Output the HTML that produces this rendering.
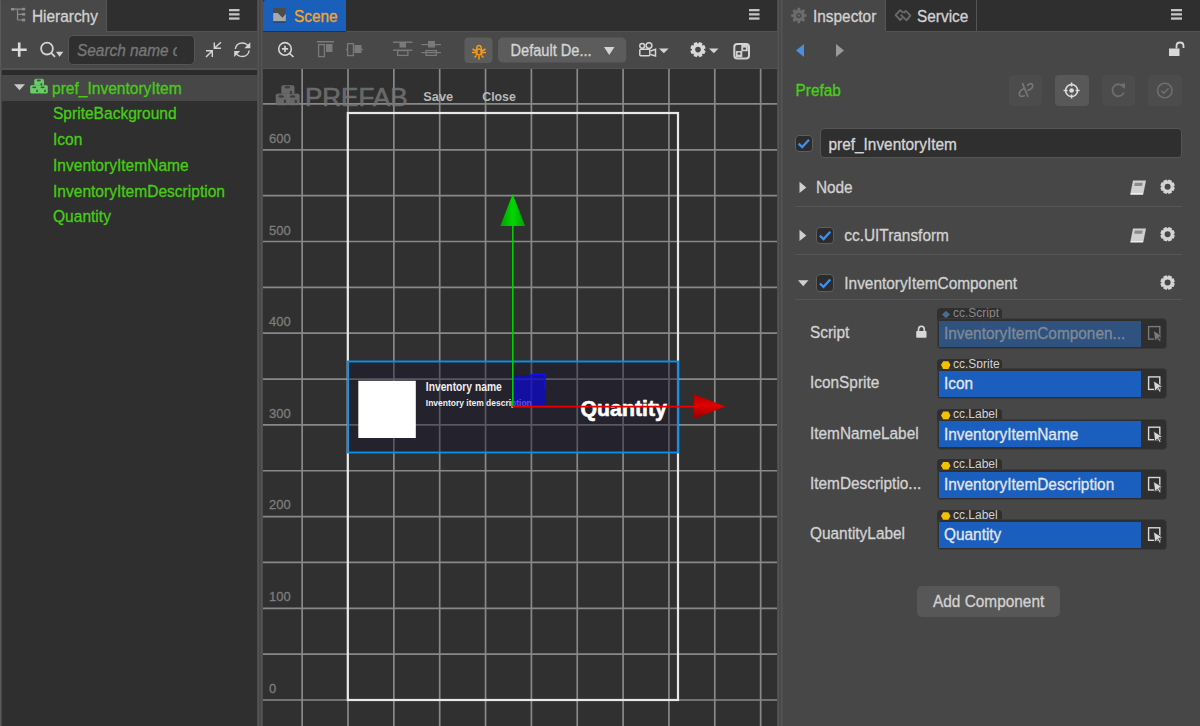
<!DOCTYPE html>
<html><head><meta charset="utf-8">
<style>
*{box-sizing:border-box;margin:0;padding:0}
html,body{width:1200px;height:726px;overflow:hidden;background:#2f2f2f;font-family:"Liberation Sans",sans-serif;color:#cfcfcf}
.a{position:absolute}
.t{position:absolute;white-space:nowrap;font-size:15.4px;line-height:26px;-webkit-text-stroke:0.3px currentColor;transform:scaleY(1.11);transform-origin:0 12.7px}
svg{position:absolute;overflow:visible}
.cb{width:17.5px;height:17.5px;background:#2c2c2c;border:1px solid #5e5e5e;border-radius:4px}
</style></head><body>

<!-- ================= HIERARCHY ================= -->
<div class="a" style="left:0;top:0;width:257px;height:726px;background:#2f2f2f"></div>
<div class="a" style="left:0;top:0;width:2px;height:726px;background:#474747"></div>
<div class="a" style="left:0;top:0;width:1px;height:726px;background:#5a5a5a"></div>
<!-- tab -->
<div class="a" style="left:1px;top:0;width:106px;height:32px;background:#484848;border-right:1px solid #555;border-top-left-radius:3px"></div>
<div class="a" style="left:107px;top:31px;width:150px;height:1px;background:#525252"></div>
<div class="t" style="left:32px;top:3px;color:#d2d2d2">Hierarchy</div>
<!-- toolbar -->
<div class="a" style="left:1px;top:32px;width:256px;height:36px;background:#484848"></div>
<div class="a" style="left:0;top:68px;width:257px;height:2px;background:#525252"></div>
<div class="a" style="left:2px;top:70px;width:255px;height:5px;background:#2b2b2b"></div>
<div class="a" style="left:68px;top:35px;width:127px;height:30px;background:#2f2f2f;border:1px solid #555;border-radius:5px"></div>
<div class="t" style="left:77px;top:37px;color:#777;font-style:italic;width:99.5px;overflow:hidden">Search name or uuid</div>
<!-- tree -->
<div class="a" style="left:2px;top:75px;width:255px;height:26px;background:#474747"></div>
<div class="t" style="left:52px;top:74.5px;color:#46cc16;font-size:15.55px">pref_InventoryItem</div>
<div class="t" style="left:53px;top:100.25px;color:#46cc16;font-size:15.55px">SpriteBackground</div>
<div class="t" style="left:53px;top:126.0px;color:#46cc16;font-size:15.55px">Icon</div>
<div class="t" style="left:53px;top:151.75px;color:#46cc16;font-size:15.55px">InventoryItemName</div>
<div class="t" style="left:53px;top:177.5px;color:#46cc16;font-size:15.55px">InventoryItemDescription</div>
<div class="t" style="left:53px;top:203.25px;color:#46cc16;font-size:15.55px">Quantity</div>

<!-- separators -->
<div class="a" style="left:257px;top:0;width:6px;height:726px;background:#494949;border-left:1px solid #4d4d4d;border-right:1px solid #4d4d4d"></div>
<div class="a" style="left:258px;top:0;width:1px;height:726px;background:#545454"></div>
<div class="a" style="left:261px;top:0;width:1px;height:726px;background:#545454"></div>
<div class="a" style="left:777px;top:0;width:6px;height:726px;background:#494949;border-left:1px solid #4d4d4d;border-right:1px solid #4d4d4d"></div>
<div class="a" style="left:778px;top:0;width:1px;height:726px;background:#545454"></div>
<div class="a" style="left:781px;top:0;width:1px;height:726px;background:#545454"></div>

<!-- ================= SCENE ================= -->
<div class="a" style="left:263px;top:0;width:514px;height:32px;background:#2f2f2f"></div>
<div class="a" style="left:263px;top:0;width:83px;height:31px;background:#1a5fba;border-top-left-radius:3px"></div>
<div class="a" style="left:346px;top:31px;width:431px;height:1px;background:#525252"></div>
<div class="t" style="left:294px;top:3px;color:#f5a623">Scene</div>
<div class="a" style="left:263px;top:32px;width:514px;height:36px;background:#484848"></div>
<div class="a" style="left:263px;top:68px;width:514px;height:1px;background:#525252"></div>
<div id="canvas" class="a" style="left:263px;top:69px;width:514px;height:657px;background:#303030;overflow:hidden">
<svg style="left:-263px;top:-69px" width="1200" height="726" viewBox="0 0 1200 726">
<g stroke="#888888" stroke-width="1.7" fill="none">
<line x1="302.15" y1="69" x2="302.15" y2="726"/>
<line x1="348.0" y1="69" x2="348.0" y2="726"/>
<line x1="393.85" y1="69" x2="393.85" y2="726"/>
<line x1="439.7" y1="69" x2="439.7" y2="726"/>
<line x1="485.55" y1="69" x2="485.55" y2="726"/>
<line x1="531.4" y1="69" x2="531.4" y2="726"/>
<line x1="577.25" y1="69" x2="577.25" y2="726"/>
<line x1="623.1" y1="69" x2="623.1" y2="726"/>
<line x1="668.95" y1="69" x2="668.95" y2="726"/>
<line x1="714.8" y1="69" x2="714.8" y2="726"/>
<line x1="760.65" y1="69" x2="760.65" y2="726"/>
<line x1="263" y1="700.0" x2="777" y2="700.0"/>
<line x1="263" y1="654.15" x2="777" y2="654.15"/>
<line x1="263" y1="608.3" x2="777" y2="608.3"/>
<line x1="263" y1="562.45" x2="777" y2="562.45"/>
<line x1="263" y1="516.6" x2="777" y2="516.6"/>
<line x1="263" y1="470.75" x2="777" y2="470.75"/>
<line x1="263" y1="424.9" x2="777" y2="424.9"/>
<line x1="263" y1="379.05" x2="777" y2="379.05"/>
<line x1="263" y1="333.2" x2="777" y2="333.2"/>
<line x1="263" y1="287.35" x2="777" y2="287.35"/>
<line x1="263" y1="241.5" x2="777" y2="241.5"/>
<line x1="263" y1="195.65" x2="777" y2="195.65"/>
<line x1="263" y1="149.8" x2="777" y2="149.8"/>
<line x1="263" y1="103.95" x2="777" y2="103.95"/>
</g>
<g font-family="Liberation Sans" font-size="13" fill="#7d7d7d" stroke="#7d7d7d" stroke-width="0.3">
<text x="269" y="143.3">600</text>
<text x="269" y="234.8">500</text>
<text x="269" y="326.3">400</text>
<text x="269" y="417.9">300</text>
<text x="269" y="509.4">200</text>
<text x="269" y="601.0">100</text>
<text x="269" y="692.5">0</text>
</g>
<!-- prefab overlay -->
<text x="305" y="105.7" font-family="Liberation Sans" font-size="26" fill="#767676" fill-opacity="0.8" stroke="#767676" stroke-opacity="0.8" stroke-width="0.7">PREFAB</text>
<text x="423.3" y="101" font-family="Liberation Sans" font-weight="bold" font-size="13" fill="#b8b8b8" textLength="29.8" lengthAdjust="spacingAndGlyphs">Save</text>
<text x="482.3" y="101" font-family="Liberation Sans" font-weight="bold" font-size="13" fill="#b8b8b8" textLength="33.5" lengthAdjust="spacingAndGlyphs">Close</text>
<!-- frame -->
<rect x="347.8" y="113" width="330.2" height="587" fill="none" stroke="#e8e8e8" stroke-width="2.2"/>
<!-- node -->
<rect x="347.8" y="361.5" width="330.2" height="91" fill="rgb(20,15,43)" fill-opacity="0.4"/>
<rect x="358.3" y="380.8" width="57.5" height="57.2" fill="#ffffff"/>
<text x="425.8" y="391.4" font-family="Liberation Sans" font-weight="bold" font-size="12" fill="#f0f0f0" textLength="76" lengthAdjust="spacingAndGlyphs">Inventory name</text>
<text x="425.8" y="405.6" font-family="Liberation Sans" font-weight="bold" font-size="9.8" fill="#f0f0f0" textLength="106" lengthAdjust="spacingAndGlyphs">Inventory item description</text>
<text x="580.6" y="416.2" font-family="Liberation Sans" font-weight="bold" font-size="22" fill="#ffffff" stroke="#ffffff" stroke-width="0.6" textLength="86.2" lengthAdjust="spacingAndGlyphs">Quantity</text>
<path d="M513 375.2H529V374.4H545.6V406.4H513Z" fill="#0a06d8" fill-opacity="0.68"/><path d="M529 374.6H545.2V390" stroke="#1010ff" stroke-width="1.3" fill="none"/>
<rect x="347.8" y="361.5" width="330.2" height="91" fill="none" stroke="#0a90ea" stroke-width="1.9"/>
<!-- gizmo -->
<line x1="512.8" y1="406.5" x2="512.8" y2="224" stroke="#00d000" stroke-width="1.6"/>
<polygon points="512.7,194 500.3,226 525.1,226" fill="url(#gg)"/>
<line x1="512.4" y1="406.6" x2="695" y2="406.6" stroke="#ee0000" stroke-width="1.6"/>
<defs><linearGradient id="rg" x1="0" y1="0" x2="0" y2="1"><stop offset="0" stop-color="#b00000"/><stop offset="0.45" stop-color="#e00000"/><stop offset="1" stop-color="#900000"/></linearGradient><linearGradient id="gg" x1="0" y1="0" x2="1" y2="0"><stop offset="0" stop-color="#00a000"/><stop offset="0.5" stop-color="#00d800"/><stop offset="1" stop-color="#00a000"/></linearGradient></defs><polygon points="694,394.3 725.3,406.4 694,419.1" fill="url(#rg)"/>
</svg>
</div>

<!-- ================= INSPECTOR ================= -->
<div class="a" style="left:783px;top:0;width:417px;height:726px;background:#474747"></div>
<div class="a" style="left:886px;top:0;width:314px;height:31px;background:#2f2f2f"></div>
<div class="a" style="left:885px;top:0;width:1px;height:31px;background:#555"></div>
<div class="a" style="left:976px;top:0;width:1px;height:31px;background:#555"></div>
<div class="a" style="left:886px;top:31px;width:314px;height:1px;background:#525252"></div>
<div class="t" style="left:813px;top:3px;color:#d2d2d2">Inspector</div>
<div class="t" style="left:917px;top:3px;color:#d2d2d2">Service</div>


<div class="t" style="left:795.5px;top:77.3px;color:#48d018">Prefab</div>
<!-- prefab buttons -->
<div class="a" style="left:1009px;top:75px;width:33px;height:31px;background:#4c4c4c;border-radius:4px"></div>
<div class="a" style="left:1055px;top:75px;width:33.5px;height:31px;background:#585858;border-radius:4px"></div>
<div class="a" style="left:1101.7px;top:75px;width:33.3px;height:31px;background:#4c4c4c;border-radius:4px"></div>
<div class="a" style="left:1148px;top:75px;width:33.7px;height:31px;background:#4c4c4c;border-radius:4px"></div>
<!-- name -->
<div class="a cb" style="left:795px;top:134.5px"></div>
<div class="a" style="left:820px;top:128px;width:361.5px;height:30px;background:#2f2f2f;border:1px solid #555;border-radius:4px"></div>
<div class="t" style="left:828.5px;top:130.6px;color:#d6d6d6">pref_InventoryItem</div>
<!-- component rows -->
<div class="t" style="left:815.9px;top:174.1px;color:#d2d2d2">Node</div>
<div class="a" style="left:795px;top:206px;width:387px;height:1px;background:#565656"></div>
<div class="a cb" style="left:816.3px;top:226.5px"></div>
<div class="t" style="left:844.3px;top:222.3px;color:#d2d2d2">cc.UITransform</div>
<div class="a" style="left:795px;top:254px;width:387px;height:1px;background:#565656"></div>
<div class="a cb" style="left:816.3px;top:274.3px"></div>
<div class="t" style="left:844.3px;top:269.6px;color:#d2d2d2">InventoryItemComponent</div>
<div class="a" style="left:795px;top:299px;width:387px;height:1px;background:#565656"></div>
<div class="t" style="left:810px;top:319.0px;color:#d2d2d2">Script</div>
<div class="a" style="left:937px;top:308.3px;width:65px;height:14px;background:#2f2f2f;border-radius:4px 4px 0 0"></div>
<div class="a" style="left:953px;top:306.3px;font-size:12px;line-height:14px;color:#8a8a8a;white-space:nowrap">cc.Script</div>
<div class="a" style="left:937px;top:318.0px;width:230px;height:31px;background:#2f2f2f;border-radius:4px;border:1px solid #3b3b3b"></div>
<div class="a" style="left:939px;top:320.7px;width:202px;height:26px;background:#2f527f"></div>
<div class="t" style="left:944px;top:320.1px;color:#7f8a96">InventoryItemComponen...</div>
<div class="t" style="left:810px;top:369.3px;color:#d2d2d2">IconSprite</div>
<div class="a" style="left:937px;top:358.6px;width:65px;height:14px;background:#2f2f2f;border-radius:4px 4px 0 0"></div>
<div class="a" style="left:953px;top:356.6px;font-size:12px;line-height:14px;color:#d2d2d2;white-space:nowrap">cc.Sprite</div>
<div class="a" style="left:937px;top:368.3px;width:230px;height:31px;background:#2f2f2f;border-radius:4px;border:1px solid #3b3b3b"></div>
<div class="a" style="left:939px;top:371.0px;width:202px;height:26px;background:#1a5fbd"></div>
<div class="t" style="left:944px;top:370.4px;color:#e2e6ec">Icon</div>
<div class="t" style="left:810px;top:419.6px;color:#d2d2d2">ItemNameLabel</div>
<div class="a" style="left:937px;top:408.9px;width:65px;height:14px;background:#2f2f2f;border-radius:4px 4px 0 0"></div>
<div class="a" style="left:953px;top:406.9px;font-size:12px;line-height:14px;color:#d2d2d2;white-space:nowrap">cc.Label</div>
<div class="a" style="left:937px;top:418.6px;width:230px;height:31px;background:#2f2f2f;border-radius:4px;border:1px solid #3b3b3b"></div>
<div class="a" style="left:939px;top:421.3px;width:202px;height:26px;background:#1a5fbd"></div>
<div class="t" style="left:944px;top:420.7px;color:#e2e6ec">InventoryItemName</div>
<div class="t" style="left:810px;top:469.9px;color:#d2d2d2">ItemDescriptio...</div>
<div class="a" style="left:937px;top:459.2px;width:65px;height:14px;background:#2f2f2f;border-radius:4px 4px 0 0"></div>
<div class="a" style="left:953px;top:457.2px;font-size:12px;line-height:14px;color:#d2d2d2;white-space:nowrap">cc.Label</div>
<div class="a" style="left:937px;top:468.9px;width:230px;height:31px;background:#2f2f2f;border-radius:4px;border:1px solid #3b3b3b"></div>
<div class="a" style="left:939px;top:471.6px;width:202px;height:26px;background:#1a5fbd"></div>
<div class="t" style="left:944px;top:471.0px;color:#e2e6ec">InventoryItemDescription</div>
<div class="t" style="left:810px;top:520.2px;color:#d2d2d2">QuantityLabel</div>
<div class="a" style="left:937px;top:509.5px;width:65px;height:14px;background:#2f2f2f;border-radius:4px 4px 0 0"></div>
<div class="a" style="left:953px;top:507.5px;font-size:12px;line-height:14px;color:#d2d2d2;white-space:nowrap">cc.Label</div>
<div class="a" style="left:937px;top:519.2px;width:230px;height:31px;background:#2f2f2f;border-radius:4px;border:1px solid #3b3b3b"></div>
<div class="a" style="left:939px;top:521.9px;width:202px;height:26px;background:#1a5fbd"></div>
<div class="t" style="left:944px;top:521.3px;color:#e2e6ec">Quantity</div>
<div class="a" style="left:917px;top:586px;width:143px;height:31px;background:#575757;border-radius:5px"></div>
<div class="t" style="left:933px;top:588.3px;color:#d2d2d2">Add Component</div>

<!--ICONS-->
<svg style="left:0;top:0" width="1200" height="726" viewBox="0 0 1200 726">
<g fill="#8c8c8c"><rect x="11" y="8" width="3.5" height="2.5"/><rect x="22" y="7.8" width="3.2" height="2.6"/><rect x="22" y="13" width="3.2" height="2.6"/><rect x="22" y="18.6" width="3.2" height="2.8"/></g><g stroke="#8c8c8c" stroke-width="1.2" fill="none"><path d="M14.5 9.2H22M17.5 9.2V20M17.5 14.3H22M17.5 20H22"/></g>
<g fill="#c4c4c4"><rect x="229" y="9" width="10.5" height="2.3"/><rect x="229" y="13.2" width="10.5" height="2.3"/><rect x="229" y="17.4" width="10.5" height="2.3"/></g>
<g fill="#c4c4c4"><rect x="749" y="9" width="10.5" height="2.3"/><rect x="749" y="13.2" width="10.5" height="2.3"/><rect x="749" y="17.4" width="10.5" height="2.3"/></g>
<g fill="#c4c4c4"><rect x="1171" y="9" width="11" height="2.3"/><rect x="1171" y="13.2" width="11" height="2.3"/><rect x="1171" y="17.4" width="11" height="2.3"/></g>
<path d="M11.7 49.7H26.7M19.2 42.6V56.8" stroke="#dcdcdc" stroke-width="2.6"/>
<g stroke="#d4d4d4" stroke-width="1.8" fill="none"><circle cx="47" cy="48.6" r="5.9"/><path d="M51.2 52.8L55 56.8"/></g><path d="M56 51.8H63.3L59.6 56.8Z" fill="#d4d4d4"/>
<g stroke="#d4d4d4" stroke-width="1.45" fill="none"><path d="M214.3 42.5V48.3H221M214.8 47.8L221 42.2"/><path d="M206 50.8H212.3V57M211.8 51.3L206 57"/></g>
<g stroke="#d4d4d4" stroke-width="1.4" fill="none"><path d="M235.3 49C236 45 239 43 242.3 43C245 43 247 44 248.5 46.5"/><path d="M249.2 50.5C248.5 54.5 245.5 56.5 242.3 56.5C239.5 56.5 237.3 55.3 236 53"/></g><path d="M250.3 42.3V48.3H244.3Z" fill="#d4d4d4"/><path d="M234.2 57V51H240.2Z" fill="#d4d4d4"/>
<path d="M14 84.3H25L19.5 90.3Z" fill="#c8c8c8"/>
<g transform="translate(30.2,78.8) scale(1.0)" fill-opacity="1"><rect x="4.1" y="0" width="9.7" height="7.5" rx="1.6" fill="#68cc68"/><rect x="0" y="6.2" width="9.4" height="8.6" rx="1.6" fill="#68cc68"/><rect x="8.6" y="6.2" width="9" height="8.6" rx="1.6" fill="#68cc68"/><ellipse cx="8.6" cy="1.7" rx="2.1" ry="0.9" fill="#3a5a3a"/><rect x="10.4" y="4.4" width="1.6" height="2.3" fill="#3a5a3a"/><ellipse cx="4" cy="8.5" rx="2.1" ry="0.9" fill="#3a5a3a"/><rect x="6" y="10.9" width="1.6" height="2.3" fill="#3a5a3a"/><ellipse cx="12.4" cy="8.5" rx="2.1" ry="0.9" fill="#3a5a3a"/><rect x="14" y="10.9" width="1.6" height="2.3" fill="#3a5a3a"/><path d="M0.3 6.6H17.4M4.4 0.4H13.6" stroke="#3a5a3a" stroke-opacity="0.25" stroke-width="0.6"/></g>
<g transform="translate(275.7,85) scale(1.36)" fill-opacity="0.9"><rect x="4.1" y="0" width="9.7" height="7.5" rx="1.6" fill="#6e6e6e"/><rect x="0" y="6.2" width="9.4" height="8.6" rx="1.6" fill="#6e6e6e"/><rect x="8.6" y="6.2" width="9" height="8.6" rx="1.6" fill="#6e6e6e"/><ellipse cx="8.6" cy="1.7" rx="2.1" ry="0.9" fill="#3a3a3a"/><rect x="10.4" y="4.4" width="1.6" height="2.3" fill="#3a3a3a"/><ellipse cx="4" cy="8.5" rx="2.1" ry="0.9" fill="#3a3a3a"/><rect x="6" y="10.9" width="1.6" height="2.3" fill="#3a3a3a"/><ellipse cx="12.4" cy="8.5" rx="2.1" ry="0.9" fill="#3a3a3a"/><rect x="14" y="10.9" width="1.6" height="2.3" fill="#3a3a3a"/><path d="M0.3 6.6H17.4M4.4 0.4H13.6" stroke="#3a3a3a" stroke-opacity="0.25" stroke-width="0.6"/></g>


<rect x="273.2" y="8" width="12.6" height="13.5" fill="#4c4c4c"/><path d="M273.2 13H277.8L282.5 17.8L285.8 13.8V21.5H273.2Z" fill="#a8a8a8"/><rect x="273.2" y="21.4" width="12.6" height="1" fill="#333"/>
<g stroke="#d4d4d4" stroke-width="1.6" fill="none"><circle cx="285" cy="48.9" r="6.3"/><path d="M289.5 53.4L293.5 57"/><path d="M285 45.8V52M281.9 48.9H288.1" stroke-width="1.7"/></g>
<g fill="#7a7a7a"><rect x="317" y="41" width="17" height="1.5"/><rect x="326" y="44" width="6.5" height="8"/><rect x="354.5" y="45" width="7" height="8"/><rect x="399.5" y="42" width="6.5" height="5.5"/><rect x="393" y="41.5" width="19.5" height="1.4"/><rect x="393" y="49.5" width="19.5" height="1.4"/><rect x="428" y="41" width="7" height="6.5"/><rect x="421.5" y="44" width="19.5" height="1.2"/><rect x="421.5" y="52" width="19.5" height="1.2"/></g><g stroke="#7a7a7a" stroke-width="1.3" fill="none"><rect x="318.6" y="44.6" width="5.8" height="12"/><rect x="347.6" y="43.6" width="5.8" height="12"/><path d="M346 49.5H347.6M353.4 49.5H354.5M361.5 49.5H363"/><rect x="397.6" y="50.6" width="10.3" height="4.8"/><rect x="426.1" y="50.6" width="10.3" height="4.8"/></g>
<rect x="464.5" y="37.5" width="28" height="25.5" rx="4" fill="#5c5c5c"/>
<g stroke="#f39a1e" stroke-width="1.5" fill="none"><path d="M476.5 55V50C476.5 47 477.5 45.5 479 45.5C480.5 45.5 481.5 47 481.5 50V55"/><ellipse cx="479" cy="52" rx="2.4" ry="3"/><path d="M472 52.6H476M482 52.6H486M472.5 49L476 51M485.5 49L482 51M474.5 57.5L476.5 55.5M483.5 57.5L481.5 55.5M479 56V59.4"/></g>
<rect x="498" y="37.6" width="128.3" height="25" rx="5" fill="#5c5c5c"/><path d="M604 47H614.5L609.2 55Z" fill="#d4d4d4"/>
<g stroke="#d4d4d4" stroke-width="1.5" fill="none"><circle cx="642.2" cy="45.8" r="2.4"/><circle cx="649" cy="45.6" r="2.9"/><rect x="639.8" y="49.3" width="10" height="6.5" rx="1"/><path d="M650.5 51L655.5 49.3V56L650.5 54.5"/></g><path d="M659 48.5H668.7L663.8 53.2Z" fill="#d4d4d4"/>
<path d="M703.99,49.89 L705.68,50.94 L704.38,54.09 L702.45,53.63 L702.03,54.05 L702.49,55.98 L699.34,57.28 L698.29,55.59 L697.71,55.59 L696.66,57.28 L693.51,55.98 L693.97,54.05 L693.55,53.63 L691.62,54.09 L690.32,50.94 L692.01,49.89 L692.01,49.31 L690.32,48.26 L691.62,45.11 L693.55,45.57 L693.97,45.15 L693.51,43.22 L696.66,41.92 L697.71,43.61 L698.29,43.61 L699.34,41.92 L702.49,43.22 L702.03,45.15 L702.45,45.57 L704.38,45.11 L705.68,48.26 L703.99,49.31Z M700.8,49.6 A2.8,2.8 0 1 0 695.2,49.6 A2.8,2.8 0 1 0 700.8,49.6Z" fill="#d8d8d8" fill-rule="evenodd"/>
<path d="M709 48.5H718.5L713.8 53.2Z" fill="#d4d4d4"/>
<rect x="734.3" y="43.9" width="14.7" height="14.5" rx="3" stroke="#d4d4d4" stroke-width="2" fill="none"/><path d="M741.3 45H747.8V51.3H741.3Z M735.8 51H742.3V57.3H735.8Z" fill="#d0d0d0"/><rect x="743.2" y="47.6" width="2.6" height="2" fill="#3a3a3a"/><rect x="737.7" y="52.6" width="2.6" height="2" fill="#3a3a3a"/>
<path d="M804.39,13.95 L806.48,14.16 L806.48,16.84 L804.39,17.05 L803.85,18.36 L805.18,19.99 L803.29,21.88 L801.66,20.55 L800.35,21.09 L800.14,23.18 L797.46,23.18 L797.25,21.09 L795.94,20.55 L794.31,21.88 L792.42,19.99 L793.75,18.36 L793.21,17.05 L791.12,16.84 L791.12,14.16 L793.21,13.95 L793.75,12.64 L792.42,11.01 L794.31,9.12 L795.94,10.45 L797.25,9.91 L797.46,7.82 L800.14,7.82 L800.35,9.91 L801.66,10.45 L803.29,9.12 L805.18,11.01 L803.85,12.64Z M801.4,15.5 A2.6,2.6 0 1 0 796.1999999999999,15.5 A2.6,2.6 0 1 0 801.4,15.5Z" fill="#6c6c6c" fill-rule="evenodd"/><circle cx="798.8" cy="15.5" r="1.2" fill="#6c6c6c"/>
<g stroke="#6a6a6a" stroke-width="1.9" fill="none" stroke-linejoin="round"><path d="M903.5 12.8L900.2 10.2L895.6 15.2L900.2 20L902.3 18"/><path d="M904.3 18.3L906.8 20.2L910.4 15.6L905.8 10.9L903.6 13"/><path d="M900.8 14.6L904.9 18.8"/></g>
<path d="M804 44V57L796 50.5Z" fill="#4a90e2"/><path d="M836 44V57L844 50.5Z" fill="#9a9a9a"/>
<rect x="1169" y="48.5" width="10.5" height="7.5" fill="#d8d8d8"/><path d="M1176.5 48.5V46C1176.5 43.5 1178 42.5 1180 42.5C1182 42.5 1183.5 43.5 1183.5 46V48" stroke="#d8d8d8" stroke-width="1.8" fill="none"/>
<g stroke="#767676" stroke-width="1.7" fill="none" stroke-linecap="round"><path d="M1022.6 83.6L1027.8 96.3"/><path d="M1023.6 88.8C1021 90 1018.8 92.5 1019.6 95C1020.3 96.8 1022.5 96.8 1024.2 95.8"/><path d="M1027.6 85.4C1029 83.2 1031.8 82.8 1032.6 85C1033.3 87.3 1031 89.6 1028.2 90.2"/></g>
<g stroke="#dcdcdc" stroke-width="1.6" fill="none"><circle cx="1071.6" cy="90.5" r="6"/><path d="M1071.6 82.5V86.5M1071.6 94.5V98.5M1063.6 90.5H1067.6M1075.6 90.5H1079.6"/></g><circle cx="1071.6" cy="90.5" r="2.3" fill="#dcdcdc"/>
<g stroke="#6e6e6e" stroke-width="1.8" fill="none"><path d="M1123.5 87A6 6 0 1 0 1124 92.5"/></g><path d="M1119 84.5L1125 83V89Z" fill="#6e6e6e"/>
<g stroke="#6e6e6e" stroke-width="1.6" fill="none"><circle cx="1164.8" cy="90.5" r="7.3"/><path d="M1161.3 90.8L1163.8 93.3L1168.5 88.3"/></g>
<path d="M798.6 143.7L802.2 147.1L809 139.7" stroke="#3f8ef0" stroke-width="2.3" fill="none"/>
<path d="M819.9 235.7L823.5 239.1L830.3 231.7" stroke="#3f8ef0" stroke-width="2.3" fill="none"/>
<path d="M819.9 283.5L823.5 286.90000000000003L830.3 279.5" stroke="#3f8ef0" stroke-width="2.3" fill="none"/>
<path d="M799.5 181.8V193L806.3 187.4Z" fill="#d0d0d0"/><path d="M799.5 229.8V241L806.3 235.4Z" fill="#d0d0d0"/><path d="M798 280.3H808.5L803.2 286.3Z" fill="#d0d0d0"/>
<path d="M1133,180.5 H1146 L1143.5,193.0 H1130.5Z" fill="#d0d0d0"/><path d="M1130.5 193.0H1143.5L1143 194.7H1130.3Z" fill="#f0f0f0"/><rect x="1134.5" y="182.7" width="8" height="3.2" fill="#8a8a8a" transform="skewX(-11)" transform-origin="1138 184.0"/>
<path d="M1133,228.4 H1146 L1143.5,240.9 H1130.5Z" fill="#d0d0d0"/><path d="M1130.5 240.9H1143.5L1143 242.6H1130.3Z" fill="#f0f0f0"/><rect x="1134.5" y="230.6" width="8" height="3.2" fill="#8a8a8a" transform="skewX(-11)" transform-origin="1138 231.9"/>
<path d="M1173.60,186.85 L1174.91,187.86 L1173.59,191.05 L1171.95,190.84 L1171.74,191.05 L1171.95,192.69 L1168.76,194.01 L1167.75,192.70 L1167.45,192.70 L1166.44,194.01 L1163.25,192.69 L1163.46,191.05 L1163.25,190.84 L1161.61,191.05 L1160.29,187.86 L1161.60,186.85 L1161.60,186.55 L1160.29,185.54 L1161.61,182.35 L1163.25,182.56 L1163.46,182.35 L1163.25,180.71 L1166.44,179.39 L1167.45,180.70 L1167.75,180.70 L1168.76,179.39 L1171.95,180.71 L1171.74,182.35 L1171.95,182.56 L1173.59,182.35 L1174.91,185.54 L1173.60,186.55Z M1170.6,186.7 A3.0,3.0 0 1 0 1164.6,186.7 A3.0,3.0 0 1 0 1170.6,186.7Z" fill="#d4d4d4" fill-rule="evenodd"/>
<path d="M1173.60,234.45 L1174.91,235.46 L1173.59,238.65 L1171.95,238.44 L1171.74,238.65 L1171.95,240.29 L1168.76,241.61 L1167.75,240.30 L1167.45,240.30 L1166.44,241.61 L1163.25,240.29 L1163.46,238.65 L1163.25,238.44 L1161.61,238.65 L1160.29,235.46 L1161.60,234.45 L1161.60,234.15 L1160.29,233.14 L1161.61,229.95 L1163.25,230.16 L1163.46,229.95 L1163.25,228.31 L1166.44,226.99 L1167.45,228.30 L1167.75,228.30 L1168.76,226.99 L1171.95,228.31 L1171.74,229.95 L1171.95,230.16 L1173.59,229.95 L1174.91,233.14 L1173.60,234.15Z M1170.6,234.3 A3.0,3.0 0 1 0 1164.6,234.3 A3.0,3.0 0 1 0 1170.6,234.3Z" fill="#d4d4d4" fill-rule="evenodd"/>
<path d="M1173.60,282.75 L1174.91,283.76 L1173.59,286.95 L1171.95,286.74 L1171.74,286.95 L1171.95,288.59 L1168.76,289.91 L1167.75,288.60 L1167.45,288.60 L1166.44,289.91 L1163.25,288.59 L1163.46,286.95 L1163.25,286.74 L1161.61,286.95 L1160.29,283.76 L1161.60,282.75 L1161.60,282.45 L1160.29,281.44 L1161.61,278.25 L1163.25,278.46 L1163.46,278.25 L1163.25,276.61 L1166.44,275.29 L1167.45,276.60 L1167.75,276.60 L1168.76,275.29 L1171.95,276.61 L1171.74,278.25 L1171.95,278.46 L1173.59,278.25 L1174.91,281.44 L1173.60,282.45Z M1170.6,282.6 A3.0,3.0 0 1 0 1164.6,282.6 A3.0,3.0 0 1 0 1170.6,282.6Z" fill="#d4d4d4" fill-rule="evenodd"/>
<rect x="916.2" y="331" width="10.3" height="6.8" rx="0.8" fill="#d8d8d8"/><path d="M918.5 331.5V329.5C918.5 327.5 919.8 326.2 921.4 326.2C923 326.2 924.3 327.5 924.3 329.5V331.5" stroke="#d8d8d8" stroke-width="1.6" fill="none"/>
<path d="M946 310.8L950 314.5L946 318.2L942 314.5Z" fill="#4c6a94"/>
<path d="M943.2 361.3H948.3L950.5 365.1L948.3 368.90000000000003H943.2L941 365.1Z" fill="#f2c200"/>
<path d="M943.2 411.59999999999997H948.3L950.5 415.4L948.3 419.2H943.2L941 415.4Z" fill="#f2c200"/>
<path d="M943.2 461.9H948.3L950.5 465.7L948.3 469.5H943.2L941 465.7Z" fill="#f2c200"/>
<path d="M943.2 512.2H948.3L950.5 516.0L948.3 519.8H943.2L941 516.0Z" fill="#f2c200"/>
<g transform="translate(0,0.0)"><rect x="1148.6" y="326.6" width="11.2" height="12.5" stroke="#7a7a7a" stroke-width="1.4" fill="none"/><path d="M1153.5 330.5L1162.8 336.5L1158.8 337.2L1161.2 341L1159.6 342L1157.3 338.3L1154.8 341Z" fill="#7a7a7a" stroke="#2f2f2f" stroke-width="0.8"/></g>
<g transform="translate(0,50.3)"><rect x="1148.6" y="326.6" width="11.2" height="12.5" stroke="#d8d8d8" stroke-width="1.4" fill="none"/><path d="M1153.5 330.5L1162.8 336.5L1158.8 337.2L1161.2 341L1159.6 342L1157.3 338.3L1154.8 341Z" fill="#d8d8d8" stroke="#2f2f2f" stroke-width="0.8"/></g>
<g transform="translate(0,100.6)"><rect x="1148.6" y="326.6" width="11.2" height="12.5" stroke="#d8d8d8" stroke-width="1.4" fill="none"/><path d="M1153.5 330.5L1162.8 336.5L1158.8 337.2L1161.2 341L1159.6 342L1157.3 338.3L1154.8 341Z" fill="#d8d8d8" stroke="#2f2f2f" stroke-width="0.8"/></g>
<g transform="translate(0,150.9)"><rect x="1148.6" y="326.6" width="11.2" height="12.5" stroke="#d8d8d8" stroke-width="1.4" fill="none"/><path d="M1153.5 330.5L1162.8 336.5L1158.8 337.2L1161.2 341L1159.6 342L1157.3 338.3L1154.8 341Z" fill="#d8d8d8" stroke="#2f2f2f" stroke-width="0.8"/></g>
<g transform="translate(0,201.2)"><rect x="1148.6" y="326.6" width="11.2" height="12.5" stroke="#d8d8d8" stroke-width="1.4" fill="none"/><path d="M1153.5 330.5L1162.8 336.5L1158.8 337.2L1161.2 341L1159.6 342L1157.3 338.3L1154.8 341Z" fill="#d8d8d8" stroke="#2f2f2f" stroke-width="0.8"/></g>
</svg>
<!--/ICONS-->
<div class="t" style="left:510.5px;top:37.4px;color:#d4d4d4;font-size:14.6px">Default De...</div>
</body></html>
